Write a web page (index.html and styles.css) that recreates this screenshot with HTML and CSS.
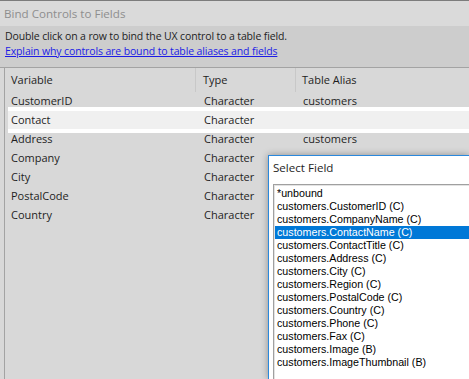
FILE: index.html
```html
<!DOCTYPE html>
<html lang="en">

<head>
    <meta charset="UTF-8">
    <meta name="viewport" content="width=device-width, initial-scale=1.0">
    <title>Bind Controls to Fields</title>
    <link rel="stylesheet" href="styles.css">
</head>

<body>
    <div class="dialog">
        <!--Title----------------------------------------------------------------------->
        <div class="titlebar">Bind Controls to Fields</div>
        <!--Description----------------------------------------------------------------->
        <div class="desc">
            <div>Double click on a row to bind the UX control to a table field.</div>
            <a href="#">Explain why controls are bound to table aliases and fields</a>
        </div>
        <!--Grid------------------------------------------------------------------------>
        <div class="grid">
            <div class="head">
                <div class="hcell">Variable</div>
                <div class="hcell">Type</div>
                <div class="hcell">Table Alias</div>
            </div>
            <div class="rows">
                <div class="row"><div class="cell">CustomerID</div><div class="cell">Character</div><div class="cell">customers</div></div>
                <div class="row current"><div class="cell">Contact</div><div class="cell">Character</div><div class="cell"></div></div>
                <div class="row"><div class="cell">Address</div><div class="cell">Character</div><div class="cell">customers</div></div>
                <div class="row"><div class="cell">Company</div><div class="cell">Character</div><div class="cell"></div></div>
                <div class="row"><div class="cell">City</div><div class="cell">Character</div><div class="cell"></div></div>
                <div class="row"><div class="cell">PostalCode</div><div class="cell">Character</div><div class="cell"></div></div>
                <div class="row"><div class="cell">Country</div><div class="cell">Character</div><div class="cell"></div></div>
            </div>
        </div>
    </div>

    <!--Select Field popup-------------------------------------------------------------->
    <div class="popup">
        <div class="popup-title">Select Field</div>
        <div class="listbox">
            <div class="item">*unbound</div>
            <div class="item">customers.CustomerID (C)</div>
            <div class="item">customers.CompanyName (C)</div>
            <div class="item selected">customers.ContactName (C)</div>
            <div class="item">customers.ContactTitle (C)</div>
            <div class="item">customers.Address (C)</div>
            <div class="item">customers.City (C)</div>
            <div class="item">customers.Region (C)</div>
            <div class="item">customers.PostalCode (C)</div>
            <div class="item">customers.Country (C)</div>
            <div class="item">customers.Phone (C)</div>
            <div class="item">customers.Fax (C)</div>
            <div class="item">customers.Image (B)</div>
            <div class="item">customers.ImageThumbnail (B)</div>
        </div>
    </div>
</body>

</html>
```
FILE: styles.css
```css
body {
    margin: 0;
    background-color: #d8d8d8;
    color: #1e1e1e;
    font-family: "Open Sans", sans-serif;
    font-size: 11px;
    overflow: hidden;
    height: 379px;
}

.dialog {
    height: 379px;
    display: flex;
    flex-direction: column;
}

.titlebar {
    border-top: 1px solid #7c7c7c;
    height: 25px;
    line-height: 25px;
    padding-left: 4px;
    background-color: #dadada;
    color: #8e8e8e;
    font-size: 11.6px;
}

.desc {
    background-color: #cdcdcd;
    padding: 3px 5px 0 5px;
    height: 38px;
    line-height: 15px;
    border-bottom: 1px solid #a3a3a3;
    font-size: 10.5px;
    letter-spacing: -0.13px;
}

.desc a {
    color: #1c1ce6;
}

.grid {
    flex: 1;
    margin-left: 4px;
    border-left: 1px solid #a3a3a3;
}

.head {
    display: grid;
    grid-template-columns: 191px 100px 1fr;
    height: 24px;
    line-height: 24px;
}

.hcell {
    padding-left: 6px;
}

.hcell:nth-child(1),
.hcell:nth-child(2) {
    border-right: 1px solid #c8c8c8;
}

.hcell:nth-child(2) {
    padding-left: 7px;
}

.rows {
    padding-left: 3px;
}

.row {
    display: grid;
    grid-template-columns: 189px 100px 1fr;
    height: 19px;
    line-height: 18px;
}

.cell {
    padding-left: 3px;
}

.cell:nth-child(2) {
    padding-left: 7px;
}

.cell:nth-child(3) {
    padding-left: 6px;
}

.row.current {
    background-color: #f0f0f0;
    box-shadow: inset 0 -1px 0 #ffffff, 0 -4px 0 #ffffff, 0 3px 0 #ffffff;
}

/* popup, cut off by the window edge on the right and bottom */
.popup {
    position: absolute;
    left: 268px;
    top: 155px;
    width: 200px;
    height: 223px;
    background-color: #ffffff;
    border: 1px solid #2a88dc;
    border-right: none;
    border-bottom: none;
    box-shadow: 0 0 7px rgba(0, 0, 0, 0.35);
    overflow: hidden;
}

.popup-title {
    height: 24px;
    line-height: 24px;
    padding-left: 4px;
    margin-bottom: 4px;
    font-size: 11.6px;
}

.listbox {
    margin-left: 4px;
    border: 1px solid #a0a0a0;
    border-right: none;
    border-bottom: none;
    box-shadow: inset 1px 1px 0 #e3e3e3;
    padding: 2px 0 0 1px;
    height: 192px;
    font-family: "Liberation Sans", sans-serif;
    font-size: 10.7px;
    color: #000000;
}

.item {
    height: 13px;
    line-height: 13px;
    padding-left: 2px;
    white-space: nowrap;
}

.item.selected {
    background-color: #0078d7;
    color: #ffffff;
}
```
